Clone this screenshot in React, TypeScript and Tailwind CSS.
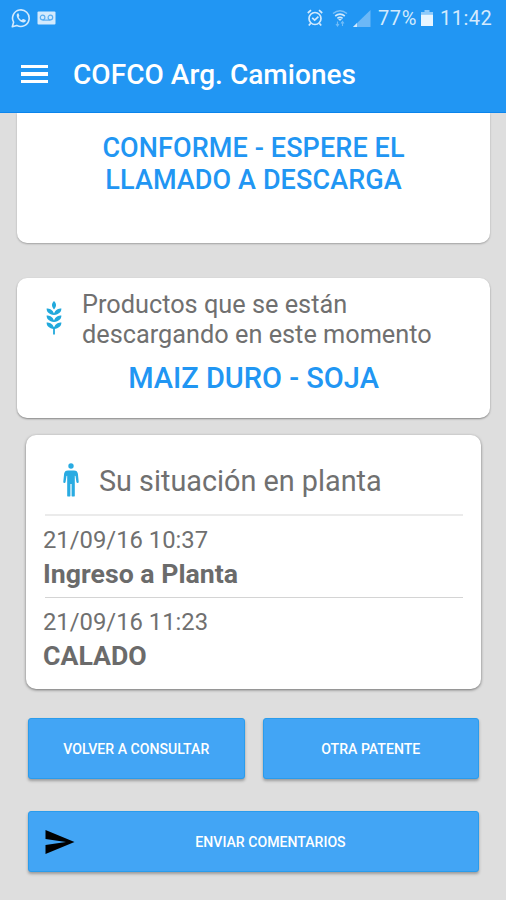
import React from 'react'

type ActionButtonProps = {
    label: string;
    className: string;
    children?: React.ReactNode;
}

const App: React.FC = () => {
    return (
        <div className="w-full h-[900px] overflow-hidden flex flex-col bg-[#dedede] font-['Roboto',sans-serif]">
            <Header />
            <main className="flex flex-col">
                <section className="ml-[17px] mr-4 h-[130px] pt-[19px] bg-white rounded-b-[10px] shadow-[0_1px_2px_rgba(0,0,0,0.28)] text-center text-[27px] leading-8 font-medium text-[#2196f3]">
                    <h2 className="tracking-[0.1px]">CONFORME - ESPERE EL</h2>
                    <h2 className="tracking-[0.1px]">LLAMADO A DESCARGA</h2>
                </section>
                <ProductsCard />
                <SituationCard />
                <div className="mt-[29px] ml-7 mr-[27px] flex flex-col gap-8">
                    <div className="flex gap-[18px]">
                        <ActionButton label="VOLVER A CONSULTAR" className="flex-1" />
                        <ActionButton label="OTRA PATENTE" className="flex-1" />
                    </div>
                    <ActionButton label="ENVIAR COMENTARIOS" className="w-full pl-[34px]">
                        <SendIcon />
                    </ActionButton>
                </div>
            </main>
        </div>
    )
}

const Header: React.FC = () => {
    return (
        <header className="h-[113px] shrink-0 bg-[#2196f3] border-b border-[#0c86ee] text-white">
            <div className="h-9 flex items-center justify-between pl-[11px] pr-[13px] text-[#d3eafd]">
                <div className="flex items-center gap-[6px]">
                    <WhatsappIcon />
                    <VoicemailIcon />
                </div>
                <div className="flex items-center text-xl leading-9">
                    <AlarmIcon />
                    <WifiIcon />
                    <SignalIcon />
                    <span className="ml-[7px] w-[43px] whitespace-nowrap tracking-[0.6px]">77%</span>
                    <BatteryIcon />
                    <span className="ml-[7px] w-[53px] whitespace-nowrap tracking-[0.5px]">11:42</span>
                </div>
            </div>
            <div className="h-[76px] flex items-center pl-[21px]">
                <div className="w-[27px] flex flex-col gap-[4px]">
                    <span className="h-[3.5px] bg-white" />
                    <span className="h-[3.5px] bg-white" />
                    <span className="h-[3.5px] bg-white" />
                </div>
                <h1 className="ml-[25px] text-[28px] leading-8 pt-px font-medium whitespace-nowrap tracking-[0.05px]">COFCO Arg. Camiones</h1>
            </div>
        </header>
    )
}

const ProductsCard: React.FC = () => {
    return (
        <section className="mt-[35px] ml-[17px] mr-4 h-[140px] pt-[11px] bg-white rounded-[10px] shadow-[0_1px_2px_rgba(0,0,0,0.4)]">
            <div className="flex">
                <div className="ml-[29px] mt-3 w-4">
                    <WheatIcon />
                </div>
                <p className="ml-5 mt-px text-[25.3px] leading-[30px] text-[#707070] whitespace-nowrap">
                    Productos que se están<br />descargando en este momento
                </p>
            </div>
            <h2 className="mt-3 text-center text-[29px] leading-8 font-medium text-[#2196f3]">MAIZ DURO - SOJA</h2>
        </section>
    )
}

const SituationCard: React.FC = () => {
    return (
        <section className="mt-[17px] ml-[26px] mr-[25px] h-[254px] px-[17px] bg-white rounded-[10px] shadow-[0_1px_3px_rgba(0,0,0,0.5)]">
            <div className="h-[79px] flex">
                <div className="ml-5 mt-7 w-4">
                    <PersonIcon />
                </div>
                <h2 className="ml-5 mt-[30px] text-[28.8px] leading-8 text-[#707070] whitespace-nowrap">Su situación en planta</h2>
            </div>
            <div className="ml-0.5 mr-px h-0.5 bg-[#ebebeb]" />
            {events.map((event, index) => {
                return <div key={index}>
                    {index > 0 && <div className="ml-0.5 mr-px h-px bg-[#d4d4d4]" />}
                    <div className="h-[81px] pt-[8px]">
                        <p className="text-[23.8px] leading-8 text-[#707070]">{event.date}</p>
                        <p className="text-[26.7px] leading-9 font-bold text-[#6b6b6b]">{event.name}</p>
                    </div>
                </div>
            })}
        </section>
    )
}

const ActionButton: React.FC<ActionButtonProps> = ({label, className, children}) => {
    return (
        <button className={`relative h-[61px] pt-[3px] rounded-[3px] border border-[#2a9cec] bg-[#42a5f5] text-white text-[14.1px] font-medium whitespace-nowrap shadow-[0_2px_3px_rgba(0,0,0,0.3)] ${className}`}>
            {children}
            {label}
        </button>
    )
}

// icons

const WhatsappIcon: React.FC = () => {
    return (
        <svg className="w-5 h-5" viewBox="0 0 20 20" fill="none">
            <path d="M1.3 18.7 2.6 14.2A8.3 8.3 0 1 1 5.8 17.4Z" stroke="currentColor" strokeWidth="1.6" strokeLinejoin="round" />
            <path d="M7.1 5.2c-.9.2-1.5 1.1-1.4 2.2.3 3.3 3.4 6.5 6.8 7 1.1.1 2.1-.6 2.3-1.6l-.1-.7-2.3-1.2-.6.2-.9 1c-1.5-.6-2.7-1.8-3.3-3.2l.8-1-.8-2.5z" fill="currentColor" />
        </svg>
    )
}

const VoicemailIcon: React.FC = () => {
    return (
        <svg className="w-[19px] h-[14px]" viewBox="0 0 19 14" fill="none">
            <rect x="0.5" y="0.5" width="18" height="13" rx="1" fill="currentColor" />
            <g stroke="#5aaef2" strokeWidth="1.2">
                <circle cx="5.6" cy="6.5" r="2.3" />
                <circle cx="13.4" cy="6.5" r="2.3" />
                <path d="M5.6 9.1h7.8" />
            </g>
        </svg>
    )
}

const AlarmIcon: React.FC = () => {
    return (
        <svg className="w-4 h-[18px]" viewBox="0 0 16 18" fill="none" stroke="currentColor" strokeWidth="1.7">
            <circle cx="8" cy="9.5" r="6" />
            <path d="M.8 4 4 1.2M15.2 4 12 1.2M3.7 14.2 1.8 16.5M12.3 14.2l1.9 2.3M5.2 8.8l2.5 2.4 3.7-3.5" />
        </svg>
    )
}

const WifiIcon: React.FC = () => {
    return (
        <svg className="ml-[9px] w-4 h-[18px]" viewBox="0 0 16 18" fill="none" stroke="currentColor">
            <path d="M1 4.5Q8-1 15 4.5" strokeWidth="1.5" opacity="0.5" />
            <path d="M3.2 7Q8 3.2 12.8 7M5.4 9.3Q8 7.2 10.6 9.3" strokeWidth="1.6" />
            <path d="m6.5 10 1.5 1.7L9.5 10z" fill="currentColor" strokeWidth="0.5" />
            <path d="M5.5 12.5v4.5M10.5 12.5v4.5M4 15l1.5 2L7 15M9 14.5l1.5-2 1.5 2" strokeWidth="1.1" opacity="0.45" />
        </svg>
    )
}

const SignalIcon: React.FC = () => {
    return (
        <svg className="ml-[5px] w-[18px] h-[18px]" viewBox="0 0 18 18">
            <path d="M0 18 17.5 1v17z" fill="#6cb8f7" />
            <path d="M0 18l4-4v4z" fill="#d3eafd" />
        </svg>
    )
}

const BatteryIcon: React.FC = () => {
    return (
        <svg className="w-3 h-[18px]" viewBox="0 0 12 18">
            <path d="M3.5 1h5v2H12v2.5H0V3h3.5z" fill="#8fcafa" />
            <path d="M0 5.5h12V17H0z" fill="#e8f5ff" />
        </svg>
    )
}

const WheatIcon: React.FC = () => {
    return (
        <svg className="w-4 h-[34px]" viewBox="0 0 16 34" fill="#22a9dc">
            <path d="M8 0c2.6 2.8 2.8 5 0 8.5C5.2 5 5.4 2.8 8 0z" />
            <path d="M.6 7.5c3 0 6 1 7.4 5 1.4-4 4.4-5 7.4-5 0 3.5-2.4 5.7-7.4 6.5-5-.8-7.4-3-7.4-6.5z" />
            <path d="M.6 14.5c3 0 6 1 7.4 5 1.4-4 4.4-5 7.4-5 0 3.5-2.4 5.7-7.4 6.5-5-.8-7.4-3-7.4-6.5z" />
            <path d="M.6 21.5c3 0 6 1 7.4 5 1.4-4 4.4-5 7.4-5 0 3.5-2.4 5.7-7.4 6.5-5-.8-7.4-3-7.4-6.5z" />
            <path d="M7.1 26h1.8v7.5H7.1z" />
        </svg>
    )
}

const PersonIcon: React.FC = () => {
    return (
        <svg className="w-4 h-[34px]" viewBox="0 0 16 34" fill="#29abe2">
            <circle cx="8" cy="3" r="2.7" />
            <path d="M5 7.5h6c2.4 0 3.5 1.2 3.9 3.3l.8 8c.1 1.5-2 1.8-2.3.3l-.9-6-.7-.3V33c0 .8-3.2.8-3.2 0V21h-1.2v12c0 .8-3.2.8-3.2 0V12.8l-.7.3-.9 6c-.3 1.5-2.4 1.2-2.300-.3l.8-8C1.5 8.7 2.6 7.5 5 7.5z" />
        </svg>
    )
}

const SendIcon: React.FC = () => {
    return (
        <svg className="absolute left-4 top-[18px] w-[30px] h-6" viewBox="0 0 30 24">
            <path d="M.5 0 29.5 12 .5 24v-9L21 12 .5 9z" fill="#000" />
        </svg>
    )
}

// data

type PlantEvent = {
    date: string;
    name: string;
}

const events: PlantEvent[] = [
    { date: "21/09/16 10:37", name: "Ingreso a Planta" },
    { date: "21/09/16 11:23", name: "CALADO" }
]

export default App
